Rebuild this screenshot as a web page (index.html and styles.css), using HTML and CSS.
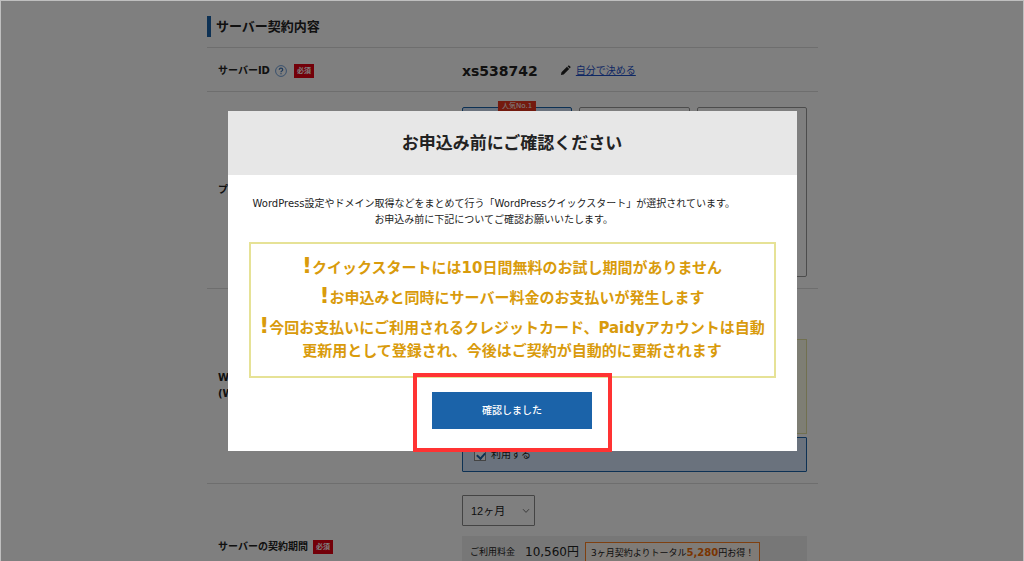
FILE: index.html
```html
<!DOCTYPE html>
<html lang="ja">
<head>
<meta charset="utf-8">
<meta name="viewport" content="width=device-width, initial-scale=1">
<title>サーバー契約内容</title>
<link rel="stylesheet" href="styles.css">
</head>
<body>
<main class="contract">
  <h1 class="contract-title">サーバー契約内容</h1>

  <section class="row row-id">
    <div class="row-label">
      <span>サーバーID</span>
      <svg class="help" viewBox="0 0 12 12" role="img" aria-label="ヘルプ"><circle cx="6" cy="6" r="5.4" fill="none" stroke="#6f9fd8"/><path d="M4.3 4.8Q4.3 3.2 6 3.2T7.7 4.7Q7.7 5.5 6.8 6Q6 6.4 6 7.2M6 8.2V9.3" fill="none" stroke="#3f76b8" stroke-width="1.3"/></svg>
      <span class="required">必須</span>
    </div>
    <div class="row-content server-id">
      <strong class="id">xs538742</strong>
      <svg class="pencil" viewBox="0 0 12 12" aria-hidden="true"><path d="M1 11L1.6 8L7.6 2L10 4.4L4 10.4ZM8.3 1.3L9.1.6Q9.7.2 10.3.8L11.2 1.7Q11.8 2.3 11.3 2.9L10.6 3.7Z" fill="#222"/></svg>
      <a class="link" href="#">自分で決める</a>
    </div>
  </section>

  <section class="row row-plan">
    <div class="row-label">プラン</div>
    <div class="row-content plans">
      <div class="plan plan-selected"><span class="popular">人気No.1</span></div>
      <div class="plan"></div>
      <div class="plan"></div>
    </div>
  </section>

  <section class="row row-wordpress">
    <div class="row-label label-stack"><span>WordPress</span><span>(WordPress)</span></div>
    <div class="row-content wordpress">
      <div class="notice"></div>
      <label class="use"><input class="check" type="checkbox" checked>利用する</label>
    </div>
  </section>

  <section class="row row-period">
    <div class="row-label"><label for="period">サーバーの契約期間</label><span class="required">必須</span></div>
    <div class="row-content period">
      <div class="select-wrap">
        <select class="select" id="period"><option>12ヶ月</option></select>
        <svg class="chevron" viewBox="0 0 8 6" aria-hidden="true"><path d="M1 1.2L4 4.4L7 1.2" fill="none" stroke="#777"/></svg>
      </div>
      <div class="price">
        <span>ご利用料金</span>
        <span class="amount">10,560円</span>
        <span class="saving">3ヶ月契約よりトータル<b class="saving-amount">5,280</b>円お得！</span>
      </div>
    </div>
  </section>
</main>

<div class="overlay">
  <div class="modal" role="dialog" aria-modal="true" aria-labelledby="modal-title">
    <header class="modal-header"><h2 class="modal-title" id="modal-title">お申込み前にご確認ください</h2></header>
    <div class="modal-body">
      <p class="lead">WordPress設定やドメイン取得などをまとめて行う「WordPressクイックスタート」が選択されています。<br>お申込み前に下記についてご確認お願いいたします。</p>
      <ul class="warnings">
        <li><span class="mark">!</span>クイックスタートには10日間無料のお試し期間がありません</li>
        <li><span class="mark">!</span>お申込みと同時にサーバー料金のお支払いが発生します</li>
        <li><span class="mark">!</span>今回お支払いにご利用されるクレジットカード、Paidyアカウントは自動<br>更新用として登録され、今後はご契約が自動的に更新されます</li>
      </ul>
      <div class="action"><button class="confirm" type="button">確認しました</button></div>
    </div>
  </div>
</div>
</body>
</html>
```
FILE: styles.css
```css
* { box-sizing: border-box; }

body {
  margin: 0;
  overflow: hidden;
  background: #fff;
  color: #222;
  font: 10px/16px "DejaVu Sans", "Noto Sans CJK JP", sans-serif;
}

.contract {
  width: 100%;
  max-width: 612px;
  margin: 0 auto;
  padding-top: 16px;
}

.contract-title {
  margin: 0 0 10px 1px;
  padding-left: 5px;
  border-left: 4px solid #1b63a9;
  font-size: 13px;
  line-height: 21px;
}

.row {
  display: grid;
  grid-template-columns: 2fr 3fr;
  gap: 14px;
  align-items: center;
  margin-left: 1px;
  padding: 0 11px;
  min-height: 44px;
  border-top: 1px solid #dcdcdc;
}

.row-id { padding-top: 2px; }

.row-label {
  display: flex;
  align-items: center;
  gap: 5px;
  font-weight: bold;
}

.label-stack {
  flex-direction: column;
  align-items: flex-start;
  gap: 0;
}

.help { width: 12px; height: 12px; }
.row-label .help { margin-right: 2px; }

.required {
  padding: 0 3px;
  background: #e60012;
  color: #fff;
  font-size: 7px;
  line-height: 14px;
}

.server-id { display: flex; align-items: center; }
.id { font-size: 14px; margin-right: 22px; }
.pencil { width: 11px; height: 11px; margin-right: 5px; }
.link { color: #1e50c8; text-decoration: underline; }

.row-plan .row-content { padding: 15px 0 11px; }

.plans {
  display: grid;
  grid-template-columns: repeat(3, 1fr);
  gap: 7px;
}

.plan {
  position: relative;
  min-height: 170px;
  border: 1px solid #999;
  border-radius: 2px;
}

.plan-selected { border: 1px solid #1b63a9; background: #d5e5fa; }

.popular {
  position: absolute;
  top: -7px;
  left: 50%;
  transform: translateX(-50%);
  padding: 0 4px;
  background: #e8341c;
  color: #fff;
  font-size: 7px;
  line-height: 11px;
  white-space: nowrap;
}

.wordpress { padding: 50px 0 11px; }

.notice {
  height: 95px;
  margin-bottom: 3px;
  border: 1px solid #e3e0a0;
  background: #fdfde8;
}

.use {
  display: flex;
  align-items: center;
  gap: 5px;
  height: 35px;
  padding-left: 11px;
  border: 1px solid #1b63a9;
  border-radius: 1px;
  background: #d5e5fa;
}

.check {
  appearance: none;
  width: 12px;
  height: 12px;
  margin: 0;
  border: 1px solid #888;
  background: #fff;
  position: relative;
}

.check:checked::after {
  content: "";
  position: absolute;
  top: 1px;
  left: 3px;
  width: 4px;
  height: 6px;
  border: solid #1b63a9;
  border-width: 0 2px 2px 0;
  transform: rotate(42deg);
}

.period { padding: 11px 0; }
.select-wrap { position: relative; width: 73px; }

.select {
  appearance: none;
  width: 100%;
  height: 31px;
  padding: 0 8px;
  border: 1px solid #888;
  border-radius: 1px;
  background: #fff;
  color: #222;
  font: 11px "Liberation Sans", "Noto Sans CJK JP", sans-serif;
}

.chevron {
  position: absolute;
  top: 13px;
  right: 5px;
  width: 8px;
  height: 6px;
}

.price {
  display: flex;
  align-items: flex-start;
  min-height: 62px;
  margin-top: 10px;
  padding: 6px 8px;
  background: #eee;
  font-size: 9px;
  line-height: 20px;
  white-space: nowrap;
}

.amount { margin: 0 6px 0 10px; font-size: 12px; }

.saving {
  padding: 0 5px;
  border: 1px solid #ff8020;
  background: #fff6ee;
}

.saving-amount { color: #f56a00; font-size: 10px; }

.overlay {
  position: fixed;
  inset: 0;
  display: flex;
  align-items: center;
  justify-content: center;
  border: 1px solid rgba(0, 0, 0, .25);
  border-bottom: 0;
  background: rgba(0, 0, 0, .5);
  background-clip: padding-box;
}

.modal {
  width: 90%;
  max-width: 569px;
  background: #fff;
}

.modal-header { padding: 20px; background: #e7e7e7; text-align: center; }
.modal-title { margin: 0; font-size: 17px; line-height: 24px; }
.modal-body { padding: 21px 21px 22px; }

.lead {
  width: fit-content;
  margin: 0 0 14px;
  padding-left: 4px;
  text-align: center;
}

.warnings {
  margin: 0 0 14px;
  padding: 13px 4px;
  border: 2px solid #e6e296;
  color: #d99b0c;
  font-size: 15px;
  font-weight: bold;
  line-height: 23px;
  list-style: none;
  text-align: center;
}

.warnings li + li { margin-top: 7px; }
.mark { font-size: 22px; line-height: 0; }

.action {
  position: relative;
  width: 160px;
  margin: 0 auto;
}

.action::after {
  content: "";
  position: absolute;
  inset: -19px -20px -23px -19px;
  border: 4px solid #ff3333;
  pointer-events: none;
}

.confirm {
  display: block;
  width: 100%;
  height: 37px;
  padding: 0;
  border: 0;
  background: #1b63a9;
  color: #fff;
  font: inherit;
  font-weight: 500;
}
```
